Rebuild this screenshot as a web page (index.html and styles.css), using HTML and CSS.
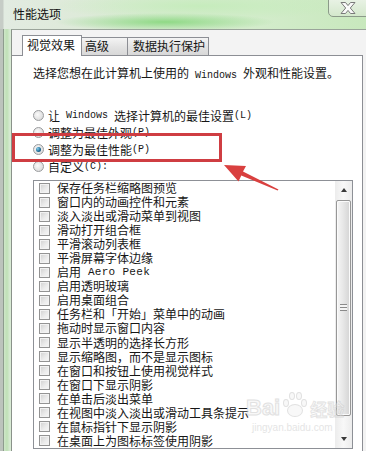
FILE: index.html
```html
<!DOCTYPE html>
<html>
<head>
<meta charset="utf-8">
<link rel="stylesheet" href="styles.css">
</head>
<body>
<div class="win">
  <div class="titlebar">
    <span class="title">性能选项</span>
    <div class="close">
      <svg width="20" height="14" viewBox="0 0 20 14"><path d="M3 1.5 H7.5 L10 4.6 L12.5 1.5 H17 L12.3 7 L17 12.5 H12.5 L10 9.4 L7.5 12.5 H3 L7.7 7 Z" fill="#fafafa" stroke="#7a7a7a" stroke-width="1"/></svg>
    </div>
  </div>
  <div class="body">
    <div class="edge"></div>
    <div class="client">
      <div class="tabs">
        <div class="tab active">视觉效果</div>
        <div class="tab">高级</div>
        <div class="tab">数据执行保护</div>
      </div>
      <div class="panel">
        <p class="intro">选择您想在此计算机上使用的<span class="lat"> Windows </span>外观和性能设置。</p>
        <div class="radios">
          <div class="radio"><span class="rb"></span><span>让</span><span class="lat"> Windows </span><span>选择计算机的最佳设置</span><span class="lat">(L)</span></div>
          <div class="radio"><span class="rb"></span><span>调整为最佳外观</span><span class="lat">(P)</span></div>
          <div class="radio"><span class="rb on"></span><span>调整为最佳性能</span><span class="lat">(P)</span></div>
          <div class="radio"><span class="rb"></span><span>自定义</span><span class="lat">(C):</span></div>
        </div>
        <div class="listbox">
          <ul class="items">
            <li><span class="cb"></span>保存任务栏缩略图预览</li>
            <li><span class="cb"></span>窗口内的动画控件和元素</li>
            <li><span class="cb"></span>淡入淡出或滑动菜单到视图</li>
            <li><span class="cb"></span>滑动打开组合框</li>
            <li><span class="cb"></span>平滑滚动列表框</li>
            <li><span class="cb"></span>平滑屏幕字体边缘</li>
            <li><span class="cb"></span><span>启用</span><span class="lat2"> Aero Peek</span></li>
            <li><span class="cb"></span>启用透明玻璃</li>
            <li><span class="cb"></span>启用桌面组合</li>
            <li><span class="cb"></span>任务栏和「开始」菜单中的动画</li>
            <li><span class="cb"></span>拖动时显示窗口内容</li>
            <li><span class="cb"></span>显示半透明的选择长方形</li>
            <li><span class="cb"></span>显示缩略图，而不是显示图标</li>
            <li><span class="cb"></span>在窗口和按钮上使用视觉样式</li>
            <li><span class="cb"></span>在窗口下显示阴影</li>
            <li><span class="cb"></span>在单击后淡出菜单</li>
            <li><span class="cb"></span>在视图中淡入淡出或滑动工具条提示</li>
            <li><span class="cb"></span>在鼠标指针下显示阴影</li>
            <li><span class="cb"></span>在桌面上为图标标签使用阴影</li>
          </ul>
          <div class="scrollbar">
            <div class="sbtn"><span class="tri up"></span></div>
            <div class="track">
              <div class="thumb"><span class="grip"></span></div>
            </div>
            <div class="sbtn"><span class="tri down"></span></div>
          </div>
        </div>
      </div>
    </div>
  </div>
  <svg class="annot" width="366" height="451" viewBox="0 0 366 451">
    <rect x="13.5" y="134.5" width="207" height="26" fill="none" stroke="#cf3d42" stroke-width="3"/>
    <polygon points="224,165 246,166 243,171.5 278.5,189.6 277.6,190.6 241.3,175.6 238.5,181.5" fill="#d9403f"/>
  </svg>
  <div class="watermark">
    <div class="wm-logo"><span class="wm-bai">Bai</span><span class="wm-paw"><i></i><i></i><i></i><i></i><b></b></span><span class="wm-jy">经验</span></div>
    <div class="wm-url">jingyan.baidu.com</div>
  </div>
</div>
</body>
</html>
```

FILE: styles.css
```css
* { box-sizing: border-box; }
html, body { margin: 0; padding: 0; }
body {
  width: 366px;
  height: 451px;
  overflow: hidden;
  font-family: "Noto Sans CJK SC", sans-serif;
  font-size: 12px;
  color: #161616;
  background: #dfe9dc;
}
.win {
  position: relative;
  width: 366px;
  height: 451px;
  display: flex;
  flex-direction: column;
  background:
    linear-gradient(to right, #bcc3bc 0, #bcc3bc 3px, #8e9c8e 3px, #8e9c8e 4px, transparent 4px),
    #d9ead5;
}
.titlebar {
  position: relative;
  height: 29px;
  flex: none;
  display: flex;
  align-items: center;
  padding-left: 13px;
  background:
    radial-gradient(ellipse 110px 9px at 165px 22px, rgba(130, 214, 120, 0.85), rgba(150, 220, 140, 0) 100%),
    radial-gradient(ellipse 150px 14px at 200px 6px, rgba(196, 236, 186, 0.9), rgba(196, 236, 186, 0) 100%),
    linear-gradient(to right, #c6ccc6 0, #c6ccc6 3px, #e2ebe1 4px, #dfeadb 60px, #d3eccb 260px, #c8e8bd 366px);
}
.title {
  font-size: 12px;
  line-height: 14px;
  color: #111;
  margin-top: -1px;
}
.close {
  position: absolute;
  right: -4px;
  top: -1px;
  width: 42px;
  height: 18px;
  border: 1px solid #8b9a89;
  border-bottom-left-radius: 5px;
  background: linear-gradient(#e8f2e4, #d4e8cc);
  display: flex;
  align-items: center;
  justify-content: center;
  padding-right: 2px;
}
.close svg { display: block; }
.body {
  flex: 1;
  display: flex;
  min-height: 0;
}
.edge {
  width: 11px;
  flex: none;
  background: linear-gradient(to right, #bcc3bc 0, #bcc3bc 3px, #8e9c8e 3px, #8e9c8e 4px, #cfe6c9 4px, #bfe0b6 7px, #d8ead4 10px);
}
.client {
  flex: 1;
  background: #f3f3f3;
  border-top: 1px solid #9aa49a;
  border-left: 1px solid #8a928a;
  padding: 5px 3px 0 0;
  display: flex;
  flex-direction: column;
  min-height: 0;
}
.tabs {
  display: flex;
  align-items: flex-end;
  height: 20px;
  flex: none;
  padding-left: 10px;
  position: relative;
  z-index: 2;
}
.tab {
  height: 18px;
  padding: 0 3px;
  line-height: 16px;
  border: 1px solid #8c8e94;
  border-bottom: none;
  background: linear-gradient(#f4f4f4, #e2e2e2 55%, #d8d8d8);
  margin-left: -1px;
  font-size: 12px;
  white-space: nowrap;
  flex: none;
}
.tab:nth-child(2) { width: 47px; }
.tab:nth-child(3) { width: 82px; padding-left: 5px; }
.tab.active {
  height: 21px;
  margin-bottom: -1px;
  width: 60px;
  margin-left: 0;
  padding-left: 4px;
  line-height: 18px;
  background: #fff;
  position: relative;
  z-index: 3;
}
.panel {
  flex: 1;
  background: #fff;
  border-top: 1px solid #8c8e94;
  border-right: 1px solid #8c8e94;
  padding: 0 0 0 21px;
  min-height: 0;
}
.intro {
  margin: 10px 0 0;
  line-height: 14px;
  white-space: nowrap;
}
.lat {
  font-family: "Liberation Mono", monospace;
  font-size: 10px;
  white-space: pre;
}
.lat2 {
  font-family: "Liberation Mono", monospace;
  font-size: 11px;
  letter-spacing: 0.3px;
  white-space: pre;
}
.radios {
  margin-top: 24px;
}
.radio {
  height: 17px;
  display: flex;
  align-items: center;
  white-space: nowrap;
  line-height: 17px;
}
.rb {
  width: 11px;
  height: 11px;
  border-radius: 50%;
  border: 1px solid #9a9c9e;
  background: radial-gradient(circle at 40% 40%, #fafafa, #dedede 70%, #cfcfcf);
  margin-right: 4px;
  flex: none;
  position: relative;
}
.rb.on::after {
  content: "";
  position: absolute;
  left: 2px;
  top: 2px;
  width: 5px;
  height: 5px;
  border-radius: 50%;
  background: radial-gradient(circle at 35% 35%, #8ad0ee, #1f6e9a 55%, #0f3c5a);
}
.listbox {
  margin-top: 5px;
  width: 320px;
  height: 269px;
  border: 1px solid #8d9096;
  display: flex;
  background: #fff;
}
.items {
  flex: 1;
  list-style: none;
  margin: 0;
  padding: 0 0 0 5px;
  overflow: hidden;
}
.items li {
  height: 14.05px;
  display: flex;
  align-items: center;
  white-space: nowrap;
  font-size: 12px;
  line-height: 14px;
}
.cb {
  width: 11px;
  height: 11px;
  border: 1px solid #939393;
  background: linear-gradient(135deg, #cfcfcf, #ececec 60%, #f6f6f6);
  box-shadow: inset 0 0 0 1px #f2f2f2;
  margin-right: 7px;
  flex: none;
}
.scrollbar {
  width: 17px;
  flex: none;
  display: flex;
  flex-direction: column;
  background: linear-gradient(to right, #ececec, #f8f8f8 50%, #ececec);
}
.sbtn {
  height: 18px;
  flex: none;
  display: flex;
  align-items: center;
  justify-content: center;
}
.tri {
  width: 0;
  height: 0;
  border-left: 3.5px solid transparent;
  border-right: 3.5px solid transparent;
}
.tri.up { border-bottom: 4px solid #3a3a3a; }
.tri.down { border-top: 4px solid #3a3a3a; }
.track {
  flex: 1;
  padding: 1px 1px 14px 1px;
  display: flex;
}
.thumb {
  flex: 1;
  border: 1px solid #979797;
  border-radius: 2px;
  background: linear-gradient(to right, #f6f6f6, #e6e6e6 50%, #d4d4d4);
  box-shadow: inset 0 0 0 1px #fbfbfb;
  display: flex;
  align-items: flex-start;
  justify-content: center;
  padding-top: 103px;
}
.grip {
  width: 7px;
  height: 7px;
  background: repeating-linear-gradient(#8a8a8a 0, #8a8a8a 1px, #f4f4f4 1px, #f4f4f4 3px);
}
.annot {
  position: absolute;
  left: 0;
  top: 0;
  pointer-events: none;
  z-index: 10;
}
.watermark {
  position: absolute;
  left: 246px;
  top: 386px;
  width: 116px;
  z-index: 5;
  opacity: 0.55;
  pointer-events: none;
}
.wm-logo {
  display: flex;
  align-items: flex-end;
  height: 34px;
}
.wm-bai {
  font-family: "Liberation Sans", sans-serif;
  font-weight: bold;
  font-size: 22px;
  line-height: 24px;
  color: #f3f3f3;
  -webkit-text-stroke: 1px #c9c9c9;
}
.wm-paw {
  position: relative;
  width: 26px;
  height: 30px;
  margin: 0 2px;
}
.wm-paw i, .wm-paw b {
  position: absolute;
  border: 1px solid #c9c9c9;
  background: #f3f3f3;
  border-radius: 50%;
}
.wm-paw i { width: 6px; height: 8px; }
.wm-paw i:nth-child(1) { left: 1px; top: 9px; }
.wm-paw i:nth-child(2) { left: 7px; top: 2px; }
.wm-paw i:nth-child(3) { left: 14px; top: 2px; }
.wm-paw i:nth-child(4) { left: 19px; top: 9px; }
.wm-paw b { left: 5px; top: 14px; width: 16px; height: 13px; }
.wm-jy {
  font-weight: bold;
  font-size: 17px;
  line-height: 22px;
  color: #f3f3f3;
  -webkit-text-stroke: 0.8px #c9c9c9;
}
.wm-url {
  font-family: "Liberation Sans", sans-serif;
  font-size: 10px;
  color: #cfcfcf;
  margin-top: 2px;
  padding-left: 6px;
}
```
